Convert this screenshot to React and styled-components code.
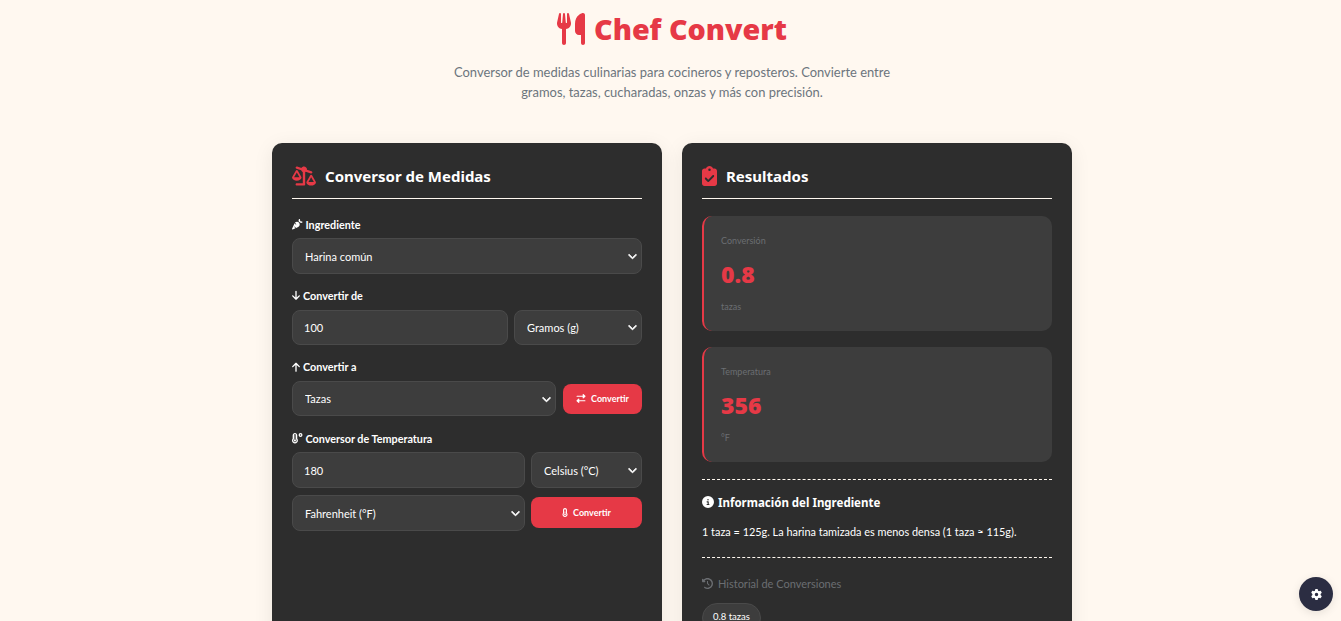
import React from 'react'
import styled, { createGlobalStyle } from 'styled-components'
import {
  FaUtensils, FaScaleUnbalancedFlip, FaCarrot, FaArrowDown, FaArrowUp, FaTemperatureHigh,
  FaRightLeft, FaTemperatureHalf, FaClipboardCheck, FaCircleInfo, FaClockRotateLeft, FaGear, FaChevronDown,
} from 'react-icons/fa6'

const HEAVY = '"Noto Sans", "Open Sans", sans-serif'

const Global = createGlobalStyle`
  * { box-sizing: border-box; }
  html, body { margin: 0; background: #fff8f0; }
  html { overflow: hidden; }
  body { font-family: Lato, "Noto Sans", sans-serif; color: #fff; }
`

const Page = styled.div`
  padding-left: 3px;
  height: 621px;
  overflow: hidden;
`

const Header = styled.header`
  text-align: center;
  padding-top: 5px;
`

const Title = styled.h1`
  margin: 0;
  height: 47px;
  display: flex;
  align-items: center;
  justify-content: center;
  gap: 9px;
  font-family: ${HEAVY};
  font-size: 28.7px;
  font-weight: 900;
  color: #e63946;
  svg { width: 28px; height: 32px; }
`

const Subtitle = styled.p`
  width: 445px;
  margin: 10px auto 0;
  font-size: 12.95px;
  line-height: 20px;
  color: #6c757d;
`

const Columns = styled.main`
  width: 800px;
  margin: 41px auto 0;
  display: grid;
  grid-template-columns: 390px 390px;
  gap: 20px;
`

const Card = styled.section`
  height: 620px;
  padding: 20px;
  background: #2d2d2d;
  border-radius: 10px;
  box-shadow: 0 4px 20px rgba(0, 0, 0, 0.08);
`

const CardTitle = styled.h2`
  margin: 0 0 17.4px;
  height: 36px;
  padding-bottom: 10px;
  display: flex;
  align-items: center;
  gap: 9px;
  border-bottom: 1px solid #fff8f0;
  font-family: ${HEAVY};
  font-size: 15px;
  font-weight: 700;
  svg { width: ${p => p.$iconWidth}px; height: 20px; color: #e63946; }
`

const Field = styled.div`
  margin-bottom: 13.8px;
`

const Label = styled.label`
  display: flex;
  align-items: center;
  gap: 3px;
  height: 16px;
  margin-bottom: 6px;
  font-size: 10.8px;
  font-weight: 700;
  svg { width: ${p => p.$iconWidth || 10.5}px; height: 10.5px; }
`

const Row = styled.div`
  display: flex;
  align-items: center;
  gap: 6px;
  & + & { margin-top: 7.5px; }
`

const SelectWrap = styled.div`
  position: relative;
  flex: ${p => p.$flex || '1 1 0'};
  svg {
    position: absolute;
    right: 5px;
    top: 50%;
    width: 9px;
    height: 9px;
    transform: translateY(-50%);
    stroke: currentColor;
    stroke-width: 40;
    pointer-events: none;
  }
`

const controlCss = `
  display: block;
  width: 100%;
  height: 35.5px;
  background: #3d3d3d;
  border: 1px solid #4a4a4a;
  border-radius: 8px;
  color: #fff;
  font-family: inherit;
  font-size: 11px;
  outline: none;
`

const NativeSelect = styled.select`
  ${controlCss}
  appearance: none;
  padding: 0 12px;
`

const Input = styled.input`
  ${controlCss}
  flex: ${p => p.$flex || '1 1 0'};
  padding: 0 11px;
`

const Button = styled.button`
  flex: ${p => p.$flex};
  height: ${p => p.$height}px;
  margin-left: ${p => p.$nudge || 0}px;
  margin-bottom: ${p => p.$lift || 0}px;
  display: flex;
  align-items: center;
  justify-content: center;
  gap: 5px;
  padding: 0;
  border: none;
  border-radius: 8px;
  background: #e63946;
  color: #fff;
  font-family: inherit;
  font-size: 9px;
  font-weight: 700;
  svg { width: ${p => p.$iconWidth}px; height: 9px; }
`

const Dropdown = ({ value, flex }) => (
  <SelectWrap $flex={flex}>
    <NativeSelect defaultValue={value}><option>{value}</option></NativeSelect>
    <FaChevronDown />
  </SelectWrap>
)

const ResultBox = styled.div`
  height: 115px;
  margin-bottom: 16px;
  padding: 18px 17px 0;
  background: #3d3d3d;
  border-left: 2px solid #e63946;
  border-radius: 10px;
`

const ResultLabel = styled.div`
  font-size: 9px;
  line-height: 14px;
  color: #6b6e72;
`

const ResultValue = styled.div`
  margin-top: 11px;
  font-family: ${HEAVY};
  font-size: 23px;
  line-height: 30px;
  font-weight: 900;
  color: #e63946;
`

const ResultUnit = styled(ResultLabel)`
  margin-top: 11px;
`

const InfoSection = styled.div`
  margin-top: 17px;
  padding: 14px 0 17px;
  border-top: 1px dashed #fff8f0;
  border-bottom: 1px dashed #fff8f0;
`

const InfoTitle = styled.h3`
  margin: 0 0 14px;
  display: flex;
  align-items: center;
  gap: 4px;
  height: 16px;
  font-family: ${HEAVY};
  font-size: 11.5px;
  font-weight: 700;
  svg { width: 12px; height: 12px; }
`

const InfoText = styled.p`
  margin: 0;
  font-size: 10.9px;
  line-height: 16px;
`

const HistoryTitle = styled.h3`
  margin: 17px 0 12px;
  display: flex;
  align-items: center;
  gap: 5px;
  height: 16px;
  font-size: 11px;
  font-weight: 400;
  color: #6b6e72;
  svg { width: 11px; height: 11px; }
`

const Chip = styled.span`
  display: inline-block;
  padding: 0 10px;
  height: 30px;
  line-height: 26px;
  background: #3d3d3d;
  border: 1px solid #4a4a4a;
  border-radius: 15px;
  font-size: 9.5px;
`

const ThemeToggle = styled.button`
  position: fixed;
  right: 8px;
  bottom: 10px;
  width: 34px;
  height: 34px;
  display: flex;
  align-items: center;
  justify-content: center;
  padding: 0;
  border: none;
  border-radius: 50%;
  background: #2b2d42;
  color: #fff;
  box-shadow: 0 2px 10px rgba(0, 0, 0, 0.1);
  svg { width: 11px; height: 11px; }
`

export default function App() {
  return (
    <Page>
      <Global />
      <Header>
        <Title><FaUtensils /> Chef Convert</Title>
        <Subtitle>
          Conversor de medidas culinarias para cocineros y reposteros. Convierte entre gramos, tazas, cucharadas, onzas y más con precisión.
        </Subtitle>
      </Header>
      <Columns>
        <Card>
          <CardTitle $iconWidth={24}><FaScaleUnbalancedFlip /> Conversor de Medidas</CardTitle>
          <Field>
            <Label><FaCarrot /> Ingrediente</Label>
            <Row><Dropdown value="Harina común" /></Row>
          </Field>
          <Field>
            <Label $iconWidth={8}><FaArrowDown /> Convertir de</Label>
            <Row>
              <Input defaultValue="100" $flex="0 0 216px" />
              <Dropdown value="Gramos (g)" />
            </Row>
          </Field>
          <Field>
            <Label $iconWidth={8}><FaArrowUp /> Convertir a</Label>
            <Row>
              <Dropdown value="Tazas" />
              <Button $flex="0 0 79px" $height={30} $nudge={1} $iconWidth={10}><FaRightLeft /> Convertir</Button>
            </Row>
          </Field>
          <Field>
            <Label><FaTemperatureHigh /> Conversor de Temperatura</Label>
            <Row>
              <Input defaultValue="180" $flex="0 0 233px" />
              <Dropdown value="Celsius (°C)" />
            </Row>
            <Row>
              <Dropdown value="Fahrenheit (°F)" flex="0 0 233px" />
              <Button $flex="1 1 0" $height={31} $lift={1} $iconWidth={6}><FaTemperatureHalf /> Convertir</Button>
            </Row>
          </Field>
        </Card>
        <Card>
          <CardTitle $iconWidth={15}><FaClipboardCheck /> Resultados</CardTitle>
          <ResultBox>
            <ResultLabel>Conversión</ResultLabel>
            <ResultValue>0.8</ResultValue>
            <ResultUnit>tazas</ResultUnit>
          </ResultBox>
          <ResultBox>
            <ResultLabel>Temperatura</ResultLabel>
            <ResultValue>356</ResultValue>
            <ResultUnit>°F</ResultUnit>
          </ResultBox>
          <InfoSection>
            <InfoTitle><FaCircleInfo /> Información del Ingrediente</InfoTitle>
            <InfoText>1 taza = 125g. La harina tamizada es menos densa (1 taza ≈ 115g).</InfoText>
          </InfoSection>
          <HistoryTitle><FaClockRotateLeft /> Historial de Conversiones</HistoryTitle>
          <Chip>0.8 tazas</Chip>
        </Card>
      </Columns>
      <ThemeToggle><FaGear /></ThemeToggle>
    </Page>
  )
}
